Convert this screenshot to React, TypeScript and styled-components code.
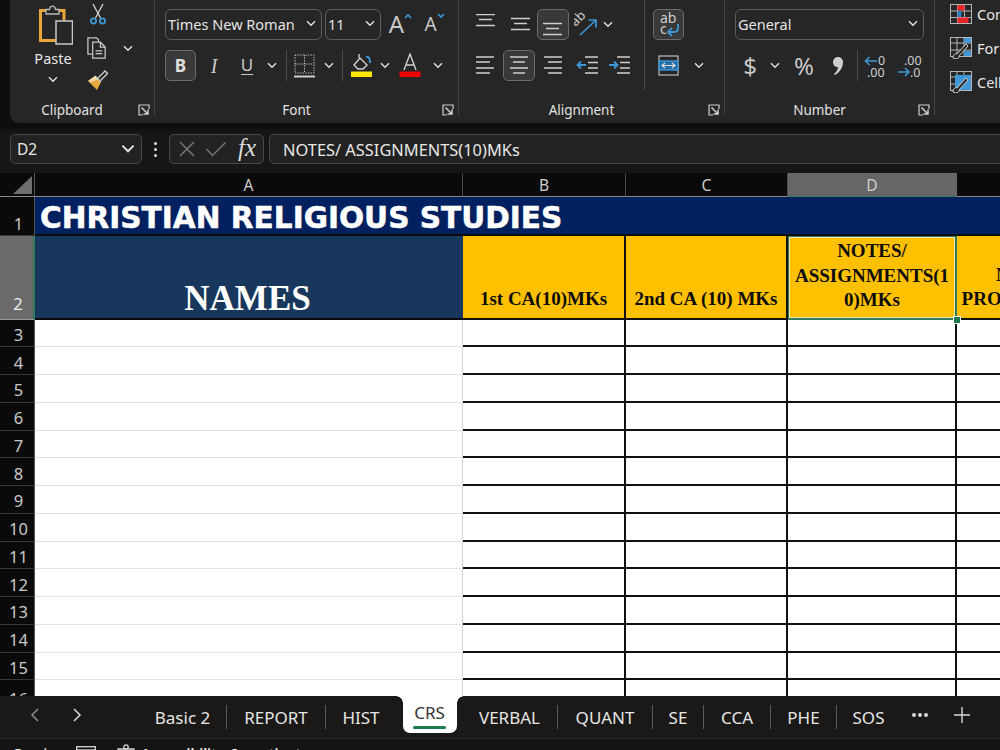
import React from "react";
import styled, { createGlobalStyle } from "styled-components";

const UI = `"Noto Sans", "Open Sans", sans-serif`;
const SERIF = `"Liberation Serif", "Times New Roman", serif`;
const GRAY = "#c9c9c9";
const BLUE = "#3f97d6";

const Global = createGlobalStyle`
  html, body { margin: 0; padding: 0; background: #0e0d0c; }
  * { box-sizing: border-box; }
`;

const Page = styled.div`
  width: 1000px; height: 750px; overflow: hidden; display: flex; flex-direction: column;
  background: #141414; font-family: ${UI}; color: #e4e4e4;
`;
const TopStrip = styled.div`
  height: 123px; flex: none; background: #0e0d0c; padding-left: 10px; display: flex; overflow: hidden;
`;
const Ribbon = styled.div`
  flex: 1; min-width: 0; background: #262626; border-bottom-left-radius: 9px; display: flex; overflow: hidden;
`;
const Group = styled.section<{ $w: number }>`
  flex: none; width: ${p => p.$w}px; height: 123px; display: flex; flex-direction: column;
`;
const GroupBody = styled.div<{ $pl?: number }>`
  height: 98px; flex: none; padding: 9px 0 0 ${p => p.$pl ?? 0}px; display: flex;
`;
const GroupFoot = styled.div`
  height: 25px; display: flex; align-items: center; padding-bottom: 2px;
`;
const GroupLabel = styled.div`
  flex: 1; text-align: center; font-size: 13.5px; color: #e2e2e2; line-height: 20px;
`;
const Launcher = styled.div`
  width: 20px; flex: none; display: flex; justify-content: center;
`;
const GroupLine = styled.div`
  flex: none; width: 1px; height: 115px; background: #454545;
`;
const Stack = styled.div`
  display: flex; flex-direction: column; gap: 10px;
`;
const Row = styled.div<{ $h?: number }>`
  display: flex; align-items: center; height: ${p => p.$h ?? 31}px;
`;
const Slot = styled.div<{ $w: number; $h?: number }>`
  flex: none; width: ${p => p.$w}px; height: ${p => (p.$h ? `${p.$h}px` : "100%")};
  display: flex; align-items: center; justify-content: center;
`;
const GrowSlot = styled(Slot)`
  padding: 0 0 1px 5px;
`;
const ToggleBtn = styled.div<{ $w?: number; $h?: number }>`
  flex: none; width: ${p => p.$w ?? 32}px; height: ${p => p.$h ?? 31}px; border: 1px solid #6c6c6c; border-radius: 5px;
  background: #393939; display: flex; align-items: center; justify-content: center;
`;
const Combo = styled.div<{ $w: number }>`
  flex: none; width: ${p => p.$w}px; height: 31px; border: 1px solid #5c5c5c; border-radius: 6px; background: #262626;
  display: flex; align-items: center; justify-content: space-between; padding: 0 5px 2px 2px;
  font-size: 14.5px; color: #e4e4e4; white-space: nowrap;
`;
const ThinRule = styled.div<{ $mx?: number }>`
  flex: none; width: 1px; height: 31px; background: #4c4c4c; margin: 0 ${p => p.$mx ?? 0}px;
`;
const TallRule = styled.div`
  flex: none; width: 1px; height: 90px; margin: -9px 8px 0 7px; background: #4c4c4c;
`;
const PasteCol = styled.div`
  width: 54px; margin-left: 16px; flex: none; margin-top: -6px; display: flex; flex-direction: column; align-items: center;
`;
const PasteText = styled.div`
  font-size: 14.5px; line-height: 20px; margin-top: 3px; color: #e6e6e6;
`;
const PasteChev = styled.div`
  margin-top: 5px; height: 12px; display: flex; align-items: center;
`;
const ToolCol = styled.div`
  width: 35px; flex: none; margin-top: -9px; display: flex; flex-direction: column; gap: 5px;
`;
const CopyChev = styled.div`
  width: 25px; flex: none; margin-top: 32px; height: 14px; display: flex; align-items: center; justify-content: center;
`;
const Glyph = styled.span<{ $size: number; $weight?: number; $color?: string }>`
  font-size: ${p => p.$size}px; font-weight: ${p => p.$weight ?? 400};
  color: ${p => p.$color ?? GRAY}; line-height: 1;
`;
const ItalicGlyph = styled.span`
  font-family: ${SERIF}; font-style: italic; font-size: 20px; color: ${GRAY}; line-height: 1;
`;
const UnderGlyph = styled.span`
  font-size: 17px; color: ${GRAY}; line-height: 1; padding-bottom: 1px; border-bottom: 1.5px solid ${GRAY};
`;
const Caret = styled.svg`
  margin: -16px 0 0 0;
`;
const StyleCol = styled.div`
  margin-top: -10px; padding-left: 15px; display: flex; flex-direction: column; gap: 5px;
`;
const StyleRow = styled.div`
  height: 29px; display: flex; align-items: center; gap: 5px; white-space: nowrap; font-size: 14.5px; color: #e6e6e6;
`;

/* Formula bar */
const FormulaBar = styled.div`
  height: 50px; flex: none; display: flex; align-items: center; padding: 2px 0 0 10px; background: linear-gradient(#0e0d0c 0, #0e0d0c 4px, #161616 9px); overflow: hidden;
`;
const NameBox = styled.div`
  flex: none; width: 132px; height: 30px; border: 1px solid #484848; border-radius: 5px; background: #222;
  display: flex; align-items: center; justify-content: space-between; padding: 0 6px 0 6px; font-size: 15.5px; color: #e8e8e8;
`;
const Dots = styled.div`
  flex: none; width: 27px; display: flex; flex-direction: column; align-items: center; gap: 3px;
`;
const Dot = styled.i`
  width: 3px; height: 3px; background: #ddd; border-radius: 50%; display: block;
`;
const FuncBox = styled.div`
  flex: none; width: 95px; height: 30px; border: 1px solid #484848; border-radius: 5px; background: #222;
  display: flex; align-items: center; padding: 0 2px 0 8px; gap: 9px;
`;
const Fx = styled.span`
  font-family: ${SERIF}; font-style: italic; font-weight: 400; font-size: 25px; color: #dcdcdc; line-height: 1; margin: -3px 0 0 2px;
`;
const FormulaInput = styled.div`
  flex: none; width: 740px; margin-left: 5px; height: 30px; border: 1px solid #484848; border-radius: 5px; background: #222;
  display: flex; align-items: center; padding-left: 13px; font-size: 16.4px; color: #e8e8e8; white-space: nowrap;
`;

/* Sheet */
const Sheet = styled.div`
  flex: 1; min-height: 0; overflow: hidden; display: grid; width: 1133px;
  grid-template-columns: 35px 428px 163px 162px 169px 176px;
  grid-template-rows: 24px 39px 83.5px repeat(14, 27.75px);
  background: #fff;
`;
const Corner = styled.div`
  background: #0a0a0a; border-right: 1px solid #555; border-bottom: 1px solid #8a8a8a; display: flex; align-items: flex-end; justify-content: flex-end; padding: 0 2px 2px 0;
`;
const ColHead = styled.div<{ $on?: boolean }>`
  background: ${p => (p.$on ? "#666" : "#0a0a0a")};
  border-right: 1px solid ${p => (p.$on ? "#666" : "#4a4a4a")};
  border-bottom: 1px solid ${p => (p.$on ? "#2f7d5a" : "#8a8a8a")};
  color: #cfcfcf; font-size: 15.5px; display: flex; align-items: center; justify-content: center; padding-top: 3px;
  line-height: 1;
`;
const RowHead = styled.div<{ $on?: boolean; $clip?: boolean }>`
  background: ${p => (p.$on ? "#6a6a6a" : "#0a0a0a")};
  border-right: ${p => (p.$on ? "2px solid #2f7d5a" : "1px solid #555")};
  border-bottom: 1px solid ${p => (p.$on ? "#9a9a9a" : "#383838")};
  color: ${p => (p.$on ? "#eee" : "#c8c8c8")}; font-size: 16.5px; line-height: 1; overflow: hidden;
  display: flex; align-items: flex-end; justify-content: center;
  padding-bottom: ${p => (p.$clip ? 0 : p.$on ? 6 : 3)}px;
  padding-left: 3px;
`;
const TitleCell = styled.div`
  grid-column: 2 / -1; background: #002060; border-bottom: 2px solid #0a0a0a; color: #fff;
  font-family: "DejaVu Sans", Verdana, sans-serif; font-weight: 700; font-size: 29.6px; line-height: 36px; padding: 3px 0 0 5px; white-space: nowrap;
  -webkit-text-stroke: 0.5px #fff;
`;
const NamesCell = styled.div`
  background: #17375d; border-bottom: 2px solid #0a0a0a; color: #fff; font-family: ${SERIF}; font-weight: 700; font-size: 35px;
  display: flex; align-items: flex-end; justify-content: center; line-height: 38px; padding: 0 3px 0 0; white-space: nowrap;
`;
const HeadCell = styled.div<{ $selected?: boolean }>`
  position: relative; background: #ffc000; color: #0d0d0d; font-family: ${SERIF}; font-weight: 700; font-size: 19px; line-height: 24.5px;
  border-right: 2px solid #111; border-bottom: 2px solid #111; text-align: center;
  display: flex; flex-direction: column; justify-content: flex-end; padding-bottom: 6px; white-space: nowrap;
  ${p => p.$selected && `box-shadow: inset 0 0 0 1px #2f7d5a, inset 0 0 0 2px #f1e2a6; border-right: 1px solid #2f7d5a; border-bottom: 1px solid #2f7d5a;`}
`;
const Handle = styled.i`
  position: absolute; right: -5px; bottom: -5px; width: 8px; height: 8px; background: #1f7a4d; border: 1px solid #fff; z-index: 2;
`;
const NameBodyCell = styled.div`
  background: #fff; border-bottom: 1px solid #e2e2e2; border-right: 1px solid #d4d4d4;
`;
const BodyCell = styled.div`
  background: #fff; border-right: 2px solid #111; border-bottom: 2px solid #111;
`;

/* Tabs */
const TabBar = styled.div`
  height: 42px; flex: none; background: #1b1917; display: flex; align-items: stretch; padding-left: 13px; position: relative; z-index: 3;
`;
const NavBtn = styled.div`
  flex: none; width: 43px; display: flex; align-items: center; justify-content: center; padding-bottom: 4px;
`;
const TabGap = styled.div`
  flex: none; width: 40px;
`;
const Tab = styled.div<{ $w: number; $last?: boolean }>`
  flex: none; width: ${p => p.$w}px; height: 24px; margin-top: 9px; display: flex; align-items: center; justify-content: center;
  font-size: 17px; color: #e6e6e6; white-space: nowrap; border-right: 1px solid ${p => (p.$last ? "transparent" : "#5a5855")};
`;
const ActiveWrap = styled.div`
  flex: none; width: 65px; display: flex; justify-content: center; position: relative;
`;
const ActiveTab = styled.div`
  position: relative; width: 54px; height: 37px; background: #fff; border-radius: 0 0 7px 7px; color: #333;
  font-size: 17px; display: flex; flex-direction: column; align-items: center; padding-top: 5px; line-height: 24px;
  &::before, &::after { content: ""; position: absolute; top: 0; width: 7px; height: 7px; }
  &::before { left: -7px; background: radial-gradient(circle at 0 100%, transparent 6.5px, #fff 7px); }
  &::after { right: -7px; background: radial-gradient(circle at 100% 100%, transparent 6.5px, #fff 7px); }
`;
const TabMark = styled.i`
  display: block; width: 33px; height: 3px; border-radius: 2px; background: #1f7a4d; margin-top: 1px;
`;
const TabTool = styled.div<{ $w: number }>`
  flex: none; width: ${p => p.$w}px; display: flex; align-items: center; justify-content: center; padding-bottom: 4px;
`;

/* Status */
const StatusBar = styled.div`
  height: 12px; flex: none; background: #141414; border-top: 1px solid #2e2c2a; overflow: hidden; display: flex; align-items: flex-start; padding: 5px 0 0 14px;
  font-size: 14px; line-height: 20px; color: #e8e8e8; white-space: nowrap;
`;
const Ready = styled.span`
  width: 62px; flex: none; margin-top: 0;
`;
const StatusIcon = styled.span<{ $w: number; $mt?: number }>`
  flex: none; width: ${p => p.$w}px; margin-top: ${p => p.$mt ?? 0}px;
`;
const Access = styled.span`
  font-weight: 600; margin-top: 0;
`;

const Chev = ({ s = 10, c = "#e0e0e0" }: { s?: number; c?: string }) => (
  <svg width={s} height={s * 0.7} viewBox="0 0 10 7" fill="none">
    <path d="M1 1.2 5 5.2 9 1.2" stroke={c} strokeWidth="1.4" />
  </svg>
);
const Launch = () => (
  <svg width="12" height="12" viewBox="0 0 12 12" fill="none" stroke="#cfcfcf" strokeWidth="1.2">
    <path d="M11 5V1H1v10h4" />
    <path d="M3.5 3.5 10 10M10 5.5V10H5.5" strokeWidth="1.5" />
  </svg>
);
const PasteIcon = () => (
  <svg width="40" height="42" viewBox="0 0 40 42" fill="none">
    <path d="M13 7.5H7.5v30H24" stroke="#eaa63a" strokeWidth="3" />
    <path d="M25 7.5h6v10" stroke="#eaa63a" strokeWidth="3" />
    <path d="M13 11V6.5h3.5C17 2 22 2 22.5 6.5H26V11Z" fill="#262626" stroke="#b8b8b8" strokeWidth="1.3" />
    <rect x="23" y="18" width="16.5" height="23" fill="#262626" stroke="#c9c9c9" strokeWidth="1.5" />
  </svg>
);
const Scissors = () => (
  <svg width="18" height="22" viewBox="0 0 18 22" fill="none">
    <path d="M4 1 11.5 15M14 1 6.5 15" stroke="#cfcfcf" strokeWidth="1.4" />
    <circle cx="4.5" cy="18" r="2.6" stroke={BLUE} strokeWidth="1.8" />
    <circle cx="13.5" cy="18" r="2.6" stroke={BLUE} strokeWidth="1.8" />
  </svg>
);
const CopyIcon = () => (
  <svg width="23" height="23" viewBox="0 0 24 24" fill="none" stroke={GRAY} strokeWidth="1.3">
    <path d="M7 2H2v17h4" />
    <path d="M7 2h4l2 2v2" />
    <path d="M7 6.5h8l5 5v11.5H7Z" fill="#262626" />
    <path d="M15 6.5v5h5M10 15.5h7M10 18.5h7" />
  </svg>
);
const PainterIcon = () => (
  <svg width="22" height="22" viewBox="0 0 22 22" fill="none">
    <path d="M1 12 8 7l6 6-4 8Z" fill="#e5a93d" />
    <path d="M1 12 8 7l3 3-7 3.5Z" fill="#f3d9a0" />
    <path d="M11 9l7-7 2.5 2.5-7 7" stroke="#d0d0d0" strokeWidth="1.4" />
    <path d="M8 7l6 6" stroke="#d8d8d8" strokeWidth="1.3" />
  </svg>
);
const BigA = ({ size, up }: { size: number; up: boolean }) => (
  <GrowSlot $w={34}>
    <Glyph $size={size}>A</Glyph>
    <Caret width="8" height="6" viewBox="0 0 8 6" fill="none">
      <path d={up ? "M1 5 4 2 7 5" : "M1 1 4 4 7 1"} stroke={BLUE} strokeWidth="1.6" />
    </Caret>
  </GrowSlot>
);
const BorderIcon = () => (
  <svg width="21" height="26" viewBox="0 0 21 26" fill="none" stroke="#bdbdbd" strokeWidth="1" strokeDasharray="1.4 1.2">
    <rect x="1" y="2" width="19" height="18" />
    <path d="M10.5 2v18M1 11h19" />
    <path d="M0 23.5h21" strokeDasharray="none" strokeWidth="2" stroke="#cfcfcf" />
  </svg>
);
const FillIcon = () => (
  <svg width="23" height="26" viewBox="0 0 23 26" fill="none">
    <path d="M4 12 10 5l7 7-4 4H8Z" stroke="#cfcfcf" strokeWidth="1.4" />
    <path d="M9 5V1" stroke="#cfcfcf" strokeWidth="1.4" />
    <path d="M16 4c3-1 4 2 4 6" stroke={BLUE} strokeWidth="2" />
    <rect x="1" y="18.5" width="21" height="5.5" fill="#ffea00" />
  </svg>
);
const FontColorIcon = () => (
  <svg width="22" height="26" viewBox="0 0 22 26" fill="none">
    <path d="M5 17 11 1l6 16M7 12h8" stroke="#cfcfcf" strokeWidth="1.4" />
    <rect x="0.5" y="18.5" width="21" height="5.5" fill="#f00000" />
  </svg>
);
const Lines = ({ rows, w = 22 }: { rows: [number, number, number][]; w?: number }) => (
  <svg width={w} height="22" viewBox={`0 0 ${w} 22`} fill="none" stroke="#cfcfcf" strokeWidth="1.5">
    {rows.map(([a, b, y], i) => <path key={i} d={`M${a} ${y}H${b}`} />)}
  </svg>
);
const Orient = () => (
  <svg width="24" height="25" viewBox="0 0 24 25" fill="none">
    <text fontFamily={UI} fontSize="13" fill="#cfcfcf" transform="translate(1.5 15) rotate(-45)">ab</text>
    <path d="M6 23 21 9M14.5 8h7.5v7.5" stroke={BLUE} strokeWidth="1.7" />
  </svg>
);
const IndentIcon = ({ out }: { out: boolean }) => (
  <svg width="22" height="22" viewBox="0 0 22 22" fill="none">
    <path d="M9 2h13M12 7.5h10M12 13h10M9 18h13" stroke="#cfcfcf" strokeWidth="1.5" transform={out ? undefined : "translate(-1 0)"} />
    {out
      ? <path d="M10 10H1.5M5 6.5 1.5 10 5 13.5" stroke={BLUE} strokeWidth="1.8" />
      : <path d="M0 10h8.5M5 6.5 8.5 10 5 13.5" stroke={BLUE} strokeWidth="1.8" />}
  </svg>
);
const WrapIcon = () => (
  <svg width="26" height="26" viewBox="0 0 26 26" fill="none">
    <text x="4" y="11" fontFamily={UI} fontSize="14" fill="#cfcfcf">ab</text>
    <text x="4" y="22" fontFamily={UI} fontSize="14" fill="#cfcfcf">c</text>
    <path d="M22 12v4c0 3-1 4-4 4h-5M16 16l-4 4 4 4" stroke={BLUE} strokeWidth="1.8" />
  </svg>
);
const MergeIcon = () => (
  <svg width="21" height="21" viewBox="0 0 21 21" fill="none">
    <rect x="1" y="1" width="19" height="19" stroke="#bdbdbd" strokeWidth="1.2" />
    <rect x="1" y="6" width="19" height="9" fill="#246fa8" stroke={BLUE} strokeWidth="1.4" />
    <path d="M4 10.5h13M7 8 4 10.5 7 13M14 8l3 2.5-3 2.5" stroke="#dcdcdc" strokeWidth="1.2" />
  </svg>
);
const Comma = () => (
  <svg width="12" height="20" viewBox="0 0 12 20" fill="#cfcfcf">
    <path d="M1 6a5 5 0 0 1 10 0c0 6-4 11-8 13l-1-1c2-2 4-4 4-7C3 11 1 9 1 6Z" />
  </svg>
);
const DecIcon = ({ inc }: { inc: boolean }) => (
  <svg width="26" height="24" viewBox="0 0 26 24" fill="none" overflow="visible">
    {inc ? (
      <>
        <text x="15" y="11" fontFamily={UI} fontSize="12.5" fill="#cfcfcf">0</text>
        <text x="4" y="23" fontFamily={UI} fontSize="12.5" fill="#cfcfcf">.00</text>
        <path d="M14 7H2.5M6.5 3 2.5 7l4 4" stroke={BLUE} strokeWidth="1.6" />
      </>
    ) : (
      <>
        <text x="9" y="11" fontFamily={UI} fontSize="12.5" fill="#cfcfcf">.00</text>
        <text x="15" y="23" fontFamily={UI} fontSize="12.5" fill="#cfcfcf">.0</text>
        <path d="M3 18h11M10 14l4 4-4 4" stroke={BLUE} strokeWidth="1.6" />
      </>
    )}
  </svg>
);
const CondIcon = () => (
  <svg width="22" height="20" viewBox="0 0 22 20" fill="none" stroke="#b5b5b5" strokeWidth="1">
    <rect x="0.5" y="0.5" width="21" height="19" />
    <path d="M7.5 0v20M14.5 0v20M0 7h22M0 13.5h22" />
    <rect x="7.5" y="1" width="7" height="5.5" fill="#e8252b" stroke="none" />
    <rect x="7.5" y="7" width="4" height="6" fill="#2f7fc0" stroke="none" />
    <rect x="7.5" y="13.5" width="11" height="5.5" fill="#e8252b" stroke="none" />
  </svg>
);
const TableIcon = ({ fill }: { fill?: boolean }) => (
  <svg width="22" height="22" viewBox="0 0 22 22" fill="none" stroke="#b5b5b5" strokeWidth="1">
    <rect x="0.5" y="0.5" width="21" height="19" />
    <path d="M0 6h22M7 0v20M14 0v20M0 13h22" />
    <path d={fill ? "M5 4h16v15H5Z" : "M14 14h7v5h-7Z M14 1h7v5h-7Z"} fill={BLUE} stroke="none" />
    <path d="M3 21c0-3 2-5 4-4l9-10 2 2-9 10c1 2-3 4-6 2Z" fill="#262626" stroke="#d0d0d0" />
  </svg>
);
const XMark = () => (
  <svg width="18" height="18" viewBox="0 0 18 18" stroke="#777" strokeWidth="1.5"><path d="M2 2l14 14M16 2 2 16" /></svg>
);
const CheckMark = () => (
  <svg width="22" height="16" viewBox="0 0 22 16" fill="none" stroke="#777" strokeWidth="1.5"><path d="M1.5 8 7.5 14.5 20.5 1.5" /></svg>
);
const Arrow = ({ left }: { left?: boolean }) => (
  <svg width="9" height="14" viewBox="0 0 9 14" fill="none" stroke={left ? "#8d8d8d" : "#d8d8d8"} strokeWidth="1.5">
    <path d={left ? "M8 1 2 7l6 6" : "M1 1l6 6-6 6"} />
  </svg>
);

const Foot = ({ label }: { label: string }) => (
  <GroupFoot><GroupLabel>{label}</GroupLabel><Launcher><Launch /></Launcher></GroupFoot>
);

const rows = Array.from({ length: 14 }, (_, i) => i + 3);
const tabsBefore: [string, number][] = [["Basic 2", 88], ["REPORT", 99], ["HIST", 71]];
const tabsAfter: [string, number][] = [["VERBAL", 96], ["QUANT", 95], ["SE", 51], ["CCA", 67], ["PHE", 66]];

export default function App() {
  return (
    <Page>
      <Global />
      <TopStrip>
        <Ribbon>
          <Group $w={144}>
            <GroupBody>
              <PasteCol>
                <PasteIcon />
                <PasteText>Paste</PasteText>
                <PasteChev><Chev /></PasteChev>
              </PasteCol>
              <ToolCol>
                <Slot $w={35} $h={28}><Scissors /></Slot>
                <Slot $w={35} $h={28}><CopyIcon /></Slot>
                <Slot $w={35} $h={28}><PainterIcon /></Slot>
              </ToolCol>
              <CopyChev><Chev /></CopyChev>
            </GroupBody>
            <Foot label="Clipboard" />
          </Group>
          <GroupLine />
          <Group $w={303}>
            <GroupBody $pl={10}>
              <Stack>
                <Row>
                  <Combo $w={157}>Times New Roman<Chev /></Combo>
                  <Slot $w={3} />
                  <Combo $w={56}>11<Chev /></Combo>
                  <BigA size={24} up />
                  <BigA size={19} up={false} />
                </Row>
                <Row>
                  <ToggleBtn $w={31}><Glyph $size={17} $weight={700} $color="#e0e0e0">B</Glyph></ToggleBtn>
                  <Slot $w={36}><ItalicGlyph>I</ItalicGlyph></Slot>
                  <Slot $w={30}><UnderGlyph>U</UnderGlyph></Slot>
                  <Slot $w={20}><Chev /></Slot>
                  <ThinRule $mx={4} />
                  <Slot $w={27}><BorderIcon /></Slot>
                  <Slot $w={22}><Chev /></Slot>
                  <ThinRule $mx={2} />
                  <Slot $w={33}><FillIcon /></Slot>
                  <Slot $w={14}><Chev /></Slot>
                  <Slot $w={36}><FontColorIcon /></Slot>
                  <Slot $w={20}><Chev /></Slot>
                </Row>
              </Stack>
            </GroupBody>
            <Foot label="Font" />
          </Group>
          <GroupLine />
          <Group $w={265}>
            <GroupBody $pl={9}>
              <Stack>
                <Row>
                  <Slot $w={34}><Lines rows={[[2, 21, 0.5], [5, 18, 5.5], [2, 21, 11.5]]} /></Slot>
                  <Slot $w={35}><Lines rows={[[2, 21, 4.5], [5, 18, 9.5], [2, 21, 15.5]]} /></Slot>
                  <ToggleBtn><Lines rows={[[1, 20, 9.5], [4, 17, 14.5], [1, 20, 20.5]]} /></ToggleBtn>
                  <Slot $w={33}><Orient /></Slot>
                  <Slot $w={11}><Chev /></Slot>
                </Row>
                <Row>
                  <Slot $w={34}><Lines rows={[[2, 20, 2], [2, 16, 7], [2, 20, 13], [2, 16, 18]]} /></Slot>
                  <Slot $w={1} />
                  <ToggleBtn><Lines rows={[[2, 20, 2], [5, 17, 7], [2, 20, 13], [5, 17, 18]]} /></ToggleBtn>
                  <Slot $w={35}><Lines rows={[[2, 20, 2], [6, 20, 7], [2, 20, 13], [6, 20, 18]]} /></Slot>
                  <Slot $w={33}><IndentIcon out /></Slot>
                  <Slot $w={34}><IndentIcon out={false} /></Slot>
                </Row>
              </Stack>
              <TallRule />
              <Stack>
                <Row><ToggleBtn $w={31}><WrapIcon /></ToggleBtn></Row>
                <Row>
                  <Slot $w={31}><MergeIcon /></Slot>
                  <Slot $w={30}><Chev /></Slot>
                </Row>
              </Stack>
            </GroupBody>
            <Foot label="Alignment" />
          </Group>
          <GroupLine />
          <Group $w={209}>
            <GroupBody $pl={10}>
              <Stack>
                <Row><Combo $w={189}>General<Chev /></Combo></Row>
                <Row>
                  <Slot $w={30}><Glyph $size={24}>$</Glyph></Slot>
                  <Slot $w={20}><Chev /></Slot>
                  <Slot $w={38}><Glyph $size={24}>%</Glyph></Slot>
                  <Slot $w={30}><Comma /></Slot>
                  <Slot $w={4} />
                  <ThinRule />
                  <Slot $w={2} />
                  <Slot $w={32}><DecIcon inc /></Slot>
                  <Slot $w={32}><DecIcon inc={false} /></Slot>
                </Row>
              </Stack>
            </GroupBody>
            <Foot label="Number" />
          </Group>
          <GroupLine />
          <Group $w={70}>
            <GroupBody>
              <StyleCol>
                <StyleRow><CondIcon />Conditional Formatting</StyleRow>
                <StyleRow><TableIcon />Format as Table</StyleRow>
                <StyleRow><TableIcon fill />Cell Styles</StyleRow>
              </StyleCol>
            </GroupBody>
          </Group>
        </Ribbon>
      </TopStrip>

      <FormulaBar>
        <NameBox>D2<Chev s={14} /></NameBox>
        <Dots><Dot /><Dot /><Dot /></Dots>
        <FuncBox><XMark /><CheckMark /><Fx>fx</Fx></FuncBox>
        <FormulaInput>NOTES/ ASSIGNMENTS(10)MKs</FormulaInput>
      </FormulaBar>

      <Sheet>
        <Corner>
          <svg width="19" height="18" viewBox="0 0 19 18"><path d="M19 0v18H0Z" fill="#6e6e6e" /></svg>
        </Corner>
        <ColHead>A</ColHead>
        <ColHead>B</ColHead>
        <ColHead>C</ColHead>
        <ColHead $on>D</ColHead>
        <ColHead />

        <RowHead>1</RowHead>
        <TitleCell>CHRISTIAN RELIGIOUS STUDIES</TitleCell>

        <RowHead $on>2</RowHead>
        <NamesCell>NAMES</NamesCell>
        <HeadCell><div>1st CA(10)MKs</div></HeadCell>
        <HeadCell><div>2nd CA (10) MKs</div></HeadCell>
        <HeadCell $selected>
          <div>NOTES/</div><div>ASSIGNMENTS(1</div><div>0)MKs</div>
          <Handle />
        </HeadCell>
        <HeadCell><div>MIDTERM</div><div>PROJECT (10)MKs</div></HeadCell>

        {rows.map(n => (
          <React.Fragment key={n}>
            <RowHead $clip={n === 16}>{n}</RowHead>
            <NameBodyCell />
            <BodyCell />
            <BodyCell />
            <BodyCell />
            <BodyCell />
          </React.Fragment>
        ))}
      </Sheet>

      <TabBar>
        <NavBtn><Arrow left /></NavBtn>
        <NavBtn><Arrow /></NavBtn>
        <TabGap />
        {tabsBefore.map(([t, w]) => <Tab key={t} $w={w} $last={t === "HIST"}>{t}</Tab>)}
        <ActiveWrap>
          <ActiveTab>CRS<TabMark /></ActiveTab>
        </ActiveWrap>
        {tabsAfter.map(([t, w]) => <Tab key={t} $w={w}>{t}</Tab>)}
        <Tab $w={64} $last>SOS</Tab>
        <TabTool $w={38}>
          <svg width="16" height="4" viewBox="0 0 16 4" fill="#d8d8d8"><circle cx="2" cy="2" r="2" /><circle cx="8" cy="2" r="2" /><circle cx="14" cy="2" r="2" /></svg>
        </TabTool>
        <TabTool $w={46}>
          <svg width="16" height="16" viewBox="0 0 16 16" stroke="#d8d8d8" strokeWidth="1.4"><path d="M8 0v16M0 8h16" /></svg>
        </TabTool>
      </TabBar>

      <StatusBar>
        <Ready>Ready</Ready>
        <StatusIcon $w={41} $mt={1}>
          <svg width="20" height="14" viewBox="0 0 20 14" fill="none" stroke="#d8d8d8" strokeWidth="1.3"><rect x="0.7" y="0.7" width="18.6" height="12" /><path d="M1 4h18" /></svg>
        </StatusIcon>
        <StatusIcon $w={24} $mt={-1}>
          <svg width="18" height="14" viewBox="0 0 18 14" fill="none" stroke="#d8d8d8" strokeWidth="1.3"><path d="M1 5h16v8H1Z" /><circle cx="9" cy="3" r="2.2" /></svg>
        </StatusIcon>
        <Access>Accessibility: Investigate</Access>
      </StatusBar>
    </Page>
  );
}
